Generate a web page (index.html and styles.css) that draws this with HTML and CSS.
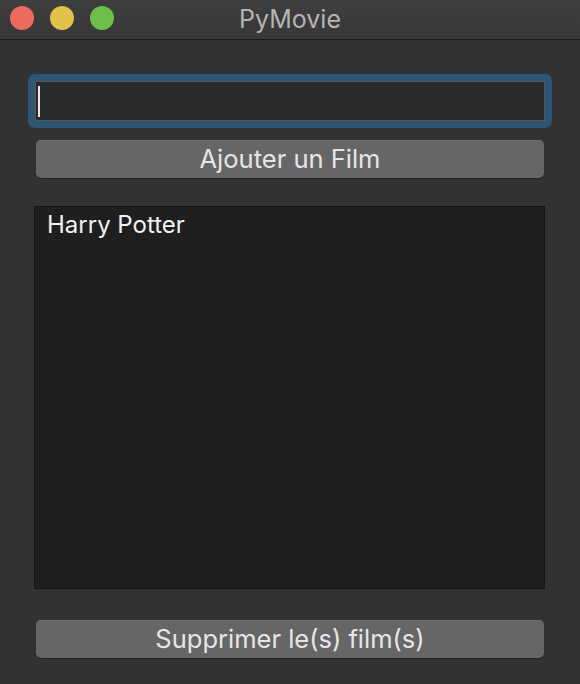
FILE: index.html
```html
<!DOCTYPE html>
<html lang="fr">
<head>
<meta charset="utf-8">
<title>PyMovie</title>
<link rel="stylesheet" href="styles.css">
</head>
<body>
<div class="window">
  <header class="titlebar">
    <div class="lights">
      <span class="light red"></span>
      <span class="light yellow"></span>
      <span class="light green"></span>
    </div>
    <div class="title">PyMovie</div>
  </header>
  <main class="content">
    <div class="focus-ring">
      <div class="field"><span class="caret"></span></div>
    </div>
    <button class="btn btn-add">Ajouter un Film</button>
    <div class="list">
      <div class="item">Harry Potter</div>
    </div>
    <button class="btn btn-del">Supprimer le(s) film(s)</button>
  </main>
</div>
</body>
</html>
```

FILE: styles.css
```css
* { box-sizing: border-box; }
html, body { margin: 0; padding: 0; }
body {
  width: 580px;
  height: 684px;
  background: #323232;
  font-family: Inter, "Liberation Sans", sans-serif;
  overflow: hidden;
}
.window { display: flex; flex-direction: column; height: 684px; }
.titlebar {
  position: relative;
  height: 40px;
  background: linear-gradient(#3e3e3e, #383838);
  border-bottom: 1px solid #1c1c1c;
  display: flex;
  align-items: center;
  justify-content: center;
}
.lights {
  position: absolute;
  left: 10px;
  top: 6px;
  display: flex;
  gap: 16px;
}
.light { width: 24px; height: 24px; border-radius: 50%; display: block; }
.red { background: #ec6a5e; }
.yellow { background: #e1c04c; }
.green { background: #6cc04a; }
.title {
  color: #b4b4b4;
  font-size: 25px;
  margin-top: -2px;
}
.content {
  padding: 34px 28px 0 28px;
  display: flex;
  flex-direction: column;
}
.focus-ring {
  background: #2d5574;
  border-radius: 7px;
  padding: 7px;
  height: 54px;
}
.field {
  height: 40px;
  background: #2a2a2a;
  border: 1px solid #565656;
  position: relative;
}
.caret {
  position: absolute;
  left: 2px;
  top: 4px;
  width: 2px;
  height: 31px;
  background: #e6e6e6;
}
.btn {
  display: block;
  margin: 0 8px;
  height: 38px;
  background: #666666;
  border: none;
  border-top: 1px solid #707070;
  border-radius: 5px;
  color: #e6e6e6;
  font-family: Inter, "Liberation Sans", sans-serif;
  font-size: 25.5px;
  padding: 0 0 3px 0;
  box-shadow: 0 1px 1px rgba(0,0,0,0.25);
}
.btn-add { margin-top: 12px; }
.list {
  margin: 28px 7px 0 6px;
  height: 383px;
  background: #1f1f1f;
  border: 1px solid #151515;
  padding: 4px 12px;
}
.item {
  color: #f2f2f2;
  font-size: 24px;
  line-height: 28px;
}
.btn-del { margin-top: 31px; }
```
